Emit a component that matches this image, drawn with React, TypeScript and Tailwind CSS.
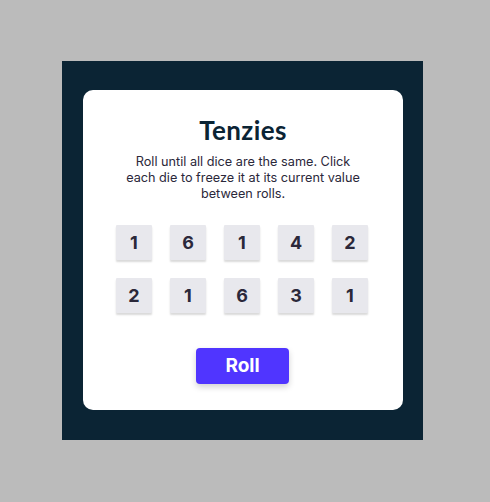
import React from "react";

const dice = [1, 6, 1, 4, 2, 2, 1, 6, 3, 1];

export default function App() {
  return (
    <div className="w-[490px] h-[502px] bg-[#bbbbbb] pt-[61px] pl-[62px]" style={{ fontFamily: "Inter, 'Noto Sans', sans-serif" }}>
      <div className="w-[361px] h-[379px] bg-[#0b2434] pt-[29px] pl-[21px]">
        <div className="w-[320px] h-[320px] bg-white rounded-[10px] flex flex-col items-center">
          <h1 className="mt-[25px] text-[26px] leading-[30px] font-bold text-[#0b2434] tracking-[0.4px]" style={{ fontFamily: "Lato, sans-serif" }}>Tenzies</h1>
          <p className="mt-[9px] text-[12.7px] leading-[16px] text-[#2b283a] text-center">
            Roll until all dice are the same. Click
            <br />
            each die to freeze it at its current value
            <br />
            between rolls.
          </p>
          <div className="mt-[23px] mr-[2px] grid grid-cols-5 gap-x-[18px] gap-y-[18px]">
            {dice.map((d, i) => (
              <div
                key={i}
                className="w-[36px] h-[35px] bg-[#e8e8ed] rounded-[1px] flex items-center justify-center text-[18px] font-bold text-[#2b283a] shadow-[0_2px_2px_rgba(0,0,0,0.15)]"
              >
                {d}
              </div>
            ))}
          </div>
          <button className="mt-[35px] mr-[1px] w-[93px] h-[36px] bg-[#5035ff] rounded-[4px] text-white text-[19px] font-bold shadow-[0_3px_6px_rgba(0,0,0,0.18)]">
            Roll
          </button>
        </div>
      </div>
    </div>
  );
}
